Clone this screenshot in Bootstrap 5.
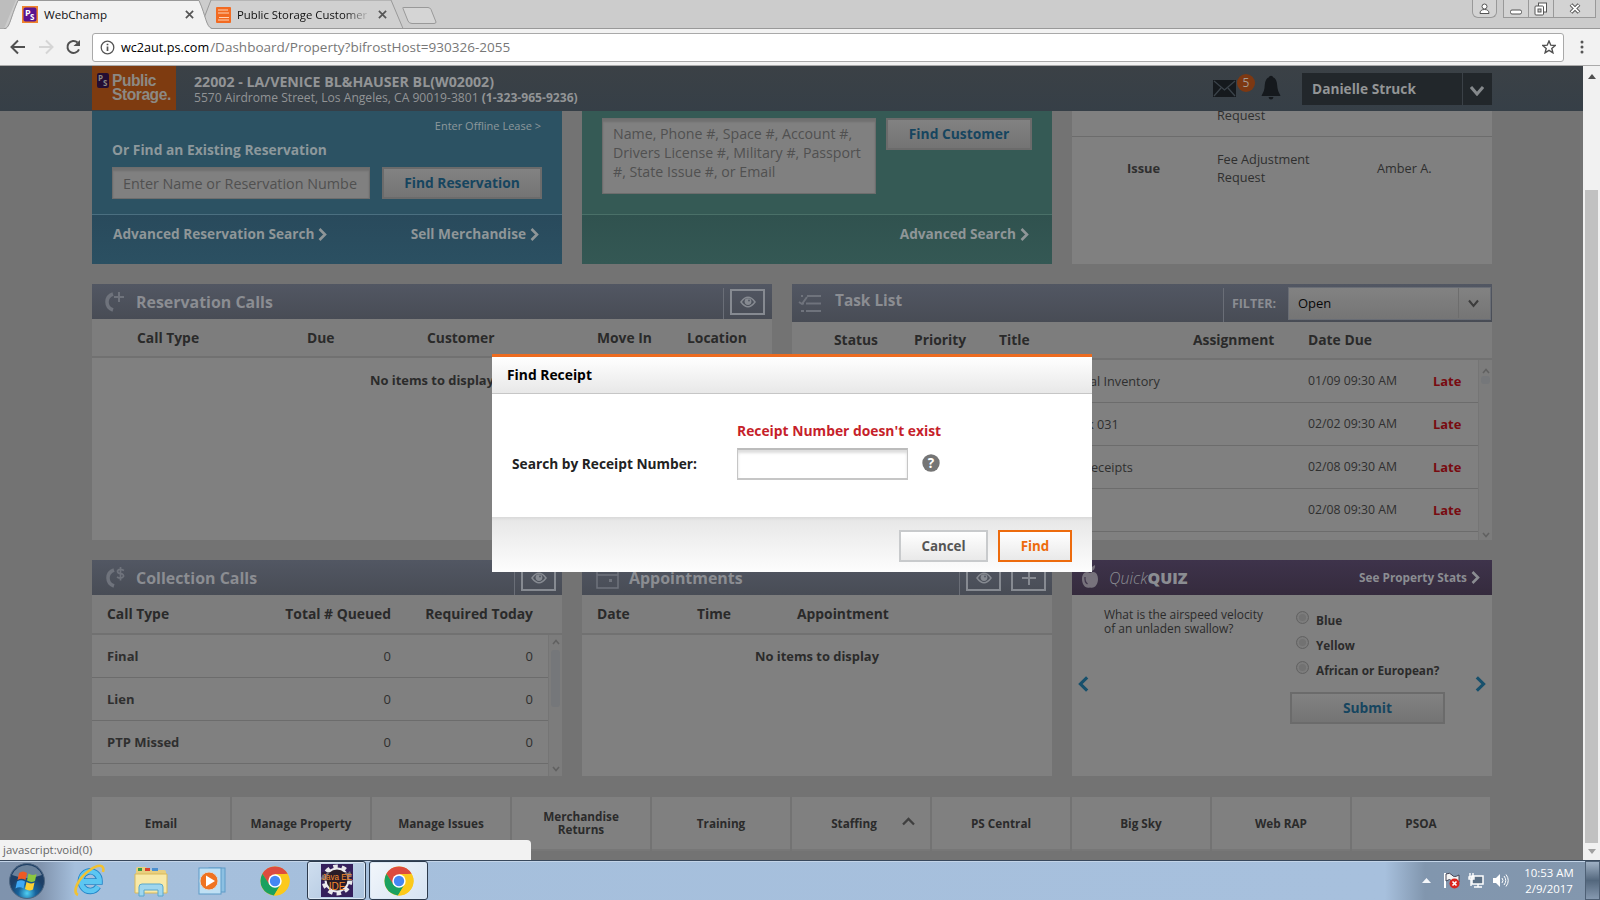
<!DOCTYPE html>
<html lang="en">
<head>
<meta charset="utf-8">
<title>WebChamp</title>
<link href="https://cdn.jsdelivr.net/npm/bootstrap@5.3.0/dist/css/bootstrap.min.css" rel="stylesheet">
<style>
body{width:1600px;height:900px;overflow:hidden;font-family:"Open Sans","Noto Sans",sans-serif;font-size:13px;line-height:18px;color:#2b2b2b;background:#737373}
svg{display:block;flex:none}
.sb{font-weight:700}
/* browser chrome */
.tabstrip{height:29px;background:#ccc;border-bottom:1px solid #999;position:relative;font-size:11.6px;color:#111}
.tabshapes{position:absolute;left:0;top:0}
.tabrow{position:relative;height:29px}
.tabtitle{font-size:11.6px;white-space:nowrap;line-height:29px}
.fadeout{width:131px;overflow:hidden;font-size:11.35px;-webkit-mask-image:linear-gradient(90deg,#000 82%,transparent 102%)}
.winbtn{height:18px;border:1px solid #999;border-top:0;background:#d3d3d3}
.toolbar{height:37px;background:#f2f2f2;border-bottom:1px solid #aaa}
.omni{width:1472px;height:29px;border:1px solid #a9a9a9;border-radius:3px;background:#fff;margin-left:12px;padding:0 7px 0 7px}
.url{font-size:13.52px;color:#777;white-space:nowrap;line-height:27px}
.url b{font-weight:400;color:#000;font-size:12.65px;margin-right:1px}
/* page */
.viewport{height:794px;position:relative}
.sitepage{width:1583px;overflow:hidden}
.sitehead{height:45px;background:linear-gradient(#3b4146,#363f47);padding-left:92px;color:#929496}
.brandbox{width:84px;height:44px;background:#7e3b10}
.brandname{font:700 15.6px/14px "Liberation Sans",sans-serif;letter-spacing:-.45px;color:#8c8984}
.content{width:1400px;margin-left:92px}
.userbox{width:190px;height:32px;background:#22272b;color:#939596;font-size:13.7px}
.gap20{gap:20px}
.hero{height:153px;width:470px}
.blue{background:#2c5263}.blue .herofoot{background:linear-gradient(#294a5c,#2b5062);border-top:1px solid #4b6f80}
.green{background:#355a55}.green .herofoot{background:linear-gradient(#30524f,#345854);border-top:1px solid #4a7068}
.herotop{height:103px;position:relative}
.herofoot{height:50px;color:#8f9698;font-size:13.65px;font-weight:700;padding:10px 21px 0}
.herotxt{color:#8d989c}
.gbtn{height:32px;border:2px solid #6b6b6b;background:linear-gradient(#828282,#747474);color:#16455f;font-weight:700;font-size:13.8px;border-radius:0;padding:0;line-height:26px}
.field{background:#808080;border:1px solid #6d6d6d;box-shadow:inset 0 3px 2px #707070;color:#505050;border-radius:0}
.panel{background:#808080;position:relative;overflow:hidden}
.phead{height:35px;background:linear-gradient(#52586a 0,#50576a 10%,#484d57);color:#8b8d92;font-size:15.95px;font-weight:700}
.phead{background:linear-gradient(#525763,#484c55)}
.phead .vline{width:1px;background:#6a6e77;align-self:stretch}
.eyebtn{width:35px;height:26px;border:2px solid #868a91;display:flex;align-items:center;justify-content:center;margin:0 7px 0 6px}
.thead-row{height:39px;background:#7d7d7d;border-bottom:2px solid #717171;font-weight:700;font-size:13.85px;color:#2a2a2a;display:grid;align-items:center}
.trow{height:43px;border-bottom:1px solid #6c6c6c;display:grid;align-items:center;color:#2f2f2f}
.g-res{grid-template-columns:45px 170px 120px 170px 90px 1fr}
.g-task{grid-template-columns:42px 80px 85px 194px 115px 125px 1fr}
.g-coll{grid-template-columns:15px 100px 184px 142px 1fr}
.g-app{grid-template-columns:15px 100px 100px 1fr}
.late{color:#780b10;font-weight:700;font-size:12.9px}
.sbar{width:14px;background:#7c7c7c;border-left:1px solid #757575}
.sthumb{width:9px;background:#75777a;margin:2px 2px;border-radius:3px}
.phead.quiz{background:linear-gradient(#3e334b,#352b3d)}
.qradio{width:13px;height:13px;border-radius:50%;border:1.500px solid #636363;background:#727272;box-shadow:inset 0 0 0 2px #7c7c7c}
.tile{width:138px;margin-right:2px;height:54px;background:#808080;border-bottom:2px solid #777;font-weight:700;font-size:11.75px;line-height:13px;color:#2b2b2b;text-align:center}
.scroller{width:17px;background:#f1f1f1}
.thumb{width:13px;height:653px;background:#c1c1c1;margin-top:111px}
/* dialog */
.dlg{position:absolute;left:492px;top:288px;width:600px;height:218px;border:0;border-top:3px solid #ec6b20;border-radius:0;background:#fff;overflow:hidden}
.dlg .modal-header{height:37px;padding:0 15px;background:linear-gradient(#fff,#e8e8e8);border-bottom:1px solid #c6c6c6;border-radius:0;font-size:13.85px;font-weight:700;color:#000}
.dlg .modal-body{padding:27px 0 0 20px}
.dlg .modal-footer{height:55px;padding:3px 20px 0;gap:10px;background:linear-gradient(#d9d9d9,#e8e8e8 7%,#fdfdfd);border:0;border-radius:0}
.dlg .modal-footer>*{margin:0}
.dbtn{height:32px;border:2px solid #c8cacc;background:linear-gradient(#fff,#e9e9e9);font-weight:700;font-size:13.35px;color:#555;border-radius:0;padding:0;line-height:26px}
.dbtn.go{border-color:#ed6b0d;color:#ed6b0d}
.rinput{width:171px;height:32px;border:1px solid #c2c2c2;border-width:2px 1px;border-color:#bcbcbc #c6c6c6 #c6c6c6;border-radius:0;box-shadow:inset 0 3px 3px #ddd;background:#fff}
.statusbub{position:absolute;left:0;bottom:0;width:531px;height:20px;background:#f2f2f2;border-radius:0 4px 0 0;font-size:11.4px;color:#666;line-height:20px;padding-left:3px;z-index:3}
/* taskbar */
.taskbar{height:40px;border-top:1px solid #38485c;background:linear-gradient(90deg,#7f93ad 0,#8093ad 40px,#a5bfdc 75px,#a7c0dd 1385px,#8196ae 1425px,#8397ae);box-shadow:inset 0 1px 0 #c3d4e8}
.tbtn{width:59px;height:39px;border:1px solid #2c3a4c;border-radius:3px;background:linear-gradient(135deg,#cfdeef,#a9c1dc);box-shadow:inset 0 0 0 1px #dce8f5}
.tbtn.on{background:linear-gradient(135deg,#f2f6fb,#d6e3f2)}
.clock{width:70px;text-align:center;color:#fff;font-size:11.4px;line-height:16px}
</style>
</head>
<body class="d-flex flex-column">
<svg width="0" height="0" class="position-absolute">
 <defs>
  <symbol id="eye" viewBox="0 0 16 12"><path d="M1 6Q8-3.500 15 6Q8 15.500 1 6Z" fill="none" stroke="#868a91" stroke-width="1.500"/><circle cx="8" cy="5.600" r="3.400" fill="#868a91"/><circle cx="9" cy="4.600" r="1" fill="#555b66"/></symbol>
  <symbol id="chev" viewBox="0 0 9 13"><path d="M1.500 1L7 6.500 1.500 12" fill="none" stroke="currentColor" stroke-width="2.600"/></symbol>
  <symbol id="chrome" viewBox="0 0 30 30"><circle cx="15" cy="15" r="14.500" fill="#fbc91b"/><path d="M2.400 7.800A14.500 14.500 0 0 1 27.600 7.800L15 8.500 8.800 18.600Z" fill="#dd4b3e"/><path d="M2.400 7.800A14.500 14.500 0 0 0 14 29.400L20.600 18.500 9.400 18.500Z" fill="#1aa15f"/><path d="M27.700 8H15V15L20.600 18.500 14 29.400A14.500 14.500 0 0 0 27.700 8Z" fill="#fbc91b"/><circle cx="15" cy="15" r="6.700" fill="#fff"/><circle cx="15" cy="15" r="5.200" fill="#4587f3"/></symbol>
  <symbol id="xx" viewBox="0 0 10 10"><path d="M1 1L9 9M9 1L1 9" stroke="#555" stroke-width="1.900"/></symbol>
  <symbol id="up" viewBox="0 0 8 6"><path d="M1 5L4 1.500 7 5" fill="none" stroke="#616161" stroke-width="1.600"/></symbol>
 </defs>
</svg>

<div class="tabstrip">
 <svg class="tabshapes" width="460" height="29">
  <path d="M200 28.500L211 0H391L403 28.500Z" fill="#d0d0d0" stroke="#999"/>
  <path d="M0 0H16L4 28.500H0Z" fill="#bdbdbd"/>
  <path d="M5 29C10 28 10 20 18 1H199C206 16 206 27 212 29Z" fill="#f2f2f2"/>
  <path d="M5 28.500C10 27 10 19 18 .5H199C206 16 206 27 212 28.500" fill="none" stroke="#999"/>
  <path d="M403 8.500Q402 7.500 404 7.500H428Q430 7.500 431 9.500L436 22Q436 23.500 434 23.500H412Q409 23.500 408 21Z" fill="#d5d5d5" stroke="#999"/>
 </svg>
 <div class="tabrow d-flex align-items-center">
  <svg width="16" height="17" style="margin-left:22px"><rect width="16" height="17" fill="#f0832c"/><rect x="1.500" y="1.500" width="13" height="14" rx="2" fill="#5a1490"/><text x="3" y="9.500" font-size="9" font-weight="700" fill="#fff" font-family="Open Sans">P</text><text x="8" y="14" font-size="8" font-weight="700" fill="#fff" font-family="Open Sans">S</text></svg>
  <span class="tabtitle" style="width:141px;margin-left:6px">WebChamp</span>
  <svg width="9" height="9"><use href="#xx"/></svg>
  <svg width="15" height="16" style="margin-left:22px"><rect width="15" height="16" rx="1" fill="#f26a21"/><path d="M2 3H12M2 6H13M3 10.500H13M2 13H13" stroke="#ffd3b5"/></svg>
  <span class="tabtitle fadeout" style="margin-left:6px">Public Storage Customer</span>
  <svg width="9" height="9" style="margin-left:10px"><use href="#xx"/></svg>
  <div class="d-flex align-self-start ms-auto" style="margin-right:4px">
   <div class="winbtn d-flex align-items-center justify-content-center rounded-bottom" style="width:25px;margin-right:6px"><svg width="11" height="12"><circle cx="5.500" cy="3.500" r="2.500" fill="#fff" stroke="#555"/><path d="M1 10.500Q1 6.500 5.500 6.500T10 10.500Z" fill="#fff" stroke="#555"/></svg></div>
   <div class="winbtn d-flex align-items-end justify-content-center" style="width:26px"><svg width="13" height="8"><rect x=".5" y="1" width="11" height="4" rx="1.500" fill="#fff" stroke="#555"/></svg></div>
   <div class="winbtn d-flex align-items-center justify-content-center border-start-0" style="width:25px"><svg width="14" height="14"><rect x="4.500" y="1" width="8" height="9" fill="#fff" stroke="#555"/><rect x="1" y="4" width="8.500" height="9" rx="1" fill="#fff" stroke="#555"/><rect x="4" y="7" width="3" height="3" fill="#ccc" stroke="#555"/></svg></div>
   <div class="winbtn d-flex align-items-center justify-content-center border-start-0" style="width:42px"><svg width="12" height="11"><path d="M2 1.500L10 9.500M10 1.500L2 9.500" stroke="#555" stroke-width="3.800"/><path d="M2.300 1.800L9.700 9.200M9.700 1.800L2.300 9.200" stroke="#fff" stroke-width="1.700"/></svg></div>
  </div>
 </div>
</div>
<div class="toolbar d-flex align-items-center">
 <svg width="70" height="16" style="margin-left:10px"><path d="M15 8H2M8 1.500L1.500 8 8 14.500" fill="none" stroke="#505050" stroke-width="2"/><path d="M29 8H42M36 1.500L42.500 8 36 14.500" fill="none" stroke="#d5d5d5" stroke-width="2"/><path d="M69 10.300A6 6 0 1 1 67.500 3.500" fill="none" stroke="#505050" stroke-width="2"/><path d="M71 0V7H63.500Z" fill="#505050"/></svg>
 <div class="omni d-flex align-items-center">
  <svg width="15" height="15"><circle cx="7.500" cy="7.500" r="6.300" fill="none" stroke="#555" stroke-width="1.300"/><path d="M7.500 6.500V11M7.500 3.700V5.300" stroke="#555" stroke-width="1.700"/></svg>
  <span class="url" style="margin-left:6px"><b>wc2aut.ps.com</b>/Dashboard/Property?bifrostHost=930326-2055</span>
  <svg width="14" height="14" class="ms-auto"><path d="M7 1L8.800 5.200 13.200 5.500 9.800 8.400 10.900 12.800 7 10.400 3.100 12.800 4.200 8.400 .8 5.500 5.200 5.200Z" fill="none" stroke="#505050" stroke-width="1.400"/></svg>
 </div>
 <svg width="4" height="16" style="margin-left:16px" fill="#555"><circle cx="2" cy="3" r="1.500"/><circle cx="2" cy="8" r="1.500"/><circle cx="2" cy="13" r="1.500"/></svg>
</div>

<div class="viewport d-flex">
 <div class="sitepage">
  <header class="sitehead d-flex">
   <div class="brandbox d-flex">
    <svg width="12" height="15" style="margin:7px 3px 0 5px"><rect width="12" height="15" rx="2" fill="#240d33"/><text x="1" y="8" font-size="8" font-weight="700" fill="#8c8984" font-family="Open Sans">P</text><text x="6" y="13" font-size="8" font-weight="700" fill="#8c8984" font-family="Open Sans">S</text></svg>
    <div class="brandname" style="padding-top:8px">Public<br>Storage.</div>
   </div>
   <div style="margin:8px 0 0 18px">
    <div class="sb" style="font-size:14.19px;line-height:16px">22002 - LA/VENICE BL&amp;HAUSER BL(W02002)</div>
    <div style="font-size:12.1px;line-height:15px">5570 Airdrome Street, Los Angeles, CA 90019-3801 <span class="sb">(1-323-965-9236)</span></div>
   </div>
   <div class="d-flex ms-auto" style="margin-right:91px;padding-top:7px">
    <div class="d-flex position-relative">
     <svg width="24" height="19" style="margin-top:6px"><rect y="1" width="23" height="17" fill="#15191d"/><path d="M1 2L11.500 11 22 2M1 17L8 9M22 17L15 9" fill="none" stroke="#3b434a" stroke-width="1.300"/></svg>
     <span class="position-absolute rounded-circle text-center" style="left:24px;top:1px;width:18px;height:18px;background:#7d3812;color:#a39a93;font-size:12px;line-height:17px">5</span>
    </div>
    <svg width="20" height="25" style="margin:2px 21px 0 24px" fill="#15191d"><circle cx="10" cy="3" r="2.200"/><path d="M10 2C4 2 4 8 3.500 13 3 17 1 19 .5 21H19.500C19 19 17 17 16.500 13 16 8 16 2 10 2Z"/><path d="M7.500 22H12.500Q12 24.500 10 24.500T7.500 22Z"/></svg>
    <div class="userbox d-flex align-items-center sb"><span style="padding-left:10px;width:160px">Danielle Struck</span><span style="width:1px;height:32px;background:#3b4147"></span><svg width="14" height="11" style="margin:2px 0 0 7px"><path d="M1 2L7 9 13 2" fill="none" stroke="#85898c" stroke-width="3"/></svg></div>
   </div>
  </header>

  <div class="content">
   <div class="d-flex gap20">
    <section class="hero blue">
     <div class="herotop" style="padding:6px 20px 0">
      <div class="herotxt text-end" style="font-size:11px;padding-right:1px">Enter Offline Lease &gt;</div>
      <div class="herotxt sb" style="font-size:13.8px;margin-top:6px">Or Find an Existing Reservation</div>
      <div class="d-flex" style="gap:12px;margin-top:8px">
       <div class="field d-flex align-items-center overflow-hidden text-nowrap" style="width:258px;height:32px;padding:1px 0 0 10px;font-size:14.35px">Enter Name or Reservation Numbe</div>
       <button class="btn gbtn" style="width:160px">Find Reservation</button>
      </div>
     </div>
     <div class="herofoot d-flex justify-content-between">
      <span class="d-flex" style="gap:4px">Advanced Reservation Search <svg width="9" height="13" style="margin-top:3px"><use href="#chev"/></svg></span>
      <span class="d-flex" style="gap:4px;margin-right:2px">Sell Merchandise <svg width="9" height="13" style="margin-top:3px"><use href="#chev"/></svg></span>
     </div>
    </section>
    <section class="hero green">
     <div class="herotop d-flex" style="padding:7px 20px 0;gap:10px">
      <div class="field" style="width:274px;height:76px;padding:5px 0 0 10px;font-size:14.2px;line-height:19px;white-space:nowrap">Name, Phone #, Space #, Account #,<br>Drivers License #, Military #, Passport<br>#, State Issue #, or Email</div>
      <button class="btn gbtn" style="width:146px">Find Customer</button>
     </div>
     <div class="herofoot d-flex justify-content-end"><span class="d-flex" style="gap:4px;margin-right:2px">Advanced Search <svg width="9" height="13" style="margin-top:3px"><use href="#chev"/></svg></span></div>
    </section>
    <section class="hero panel" style="width:420px;font-size:12.7px;color:#2f2f2f">
     <div style="height:26px;border-bottom:1px solid #6c6c6c;padding-left:145px;line-height:9px">Request</div>
     <div class="d-flex align-items-center" style="height:61px"><span class="sb" style="padding-left:55px;flex:none;width:145px;font-size:12.9px">Issue</span><span style="width:160px">Fee Adjustment<br>Request</span><span>Amber A.</span></div>
    </section>
   </div>

   <div class="d-flex gap20" style="margin-top:20px">
    <section class="panel" style="width:680px;height:256px">
     <div class="phead d-flex align-items-center">
      <svg width="20" height="22" style="margin:0 11px 0 13px" fill="none" stroke="#6f737c"><path d="M8 3Q2 5 2 11T8 19" stroke-width="3.500"/><path d="M14 1V11M9 6H19" stroke-width="2"/></svg>
      <span>Reservation Calls</span><span class="vline ms-auto mt-1"></span><span class="eyebtn"><svg width="16" height="12"><use href="#eye"/></svg></span>
     </div>
     <div class="thead-row g-res"><i></i><span>Call Type</span><span>Due</span><span>Customer</span><span>Move In</span><span>Location</span></div>
     <div class="text-center sb" style="font-size:12.9px;padding-top:13px">No items to display</div>
    </section>
    <section class="panel" style="width:700px;height:256px">
     <div class="phead d-flex align-items-center" style="height:38px;font-size:15.4px">
      <svg width="24" height="19" style="margin:0 13px 0 6px" fill="none" stroke="#6f737c" stroke-width="2"><path d="M9 2H23M8 9.500H23M8 17H23M1 8L4 10 9 3M4 9.500H6M3 17H6M3 2H5"/></svg>
      <span style="margin-top:-4px">Task List</span><span class="vline ms-auto mt-1"></span>
      <span style="font-size:12.5px;margin:2px 12px 0 8px">FILTER:</span>
      <div class="d-flex align-items-center" style="width:203px;height:33px;background:linear-gradient(#828282,#757575);border:1px solid #696d75;margin-right:1px;color:#080808;font-size:13px;font-weight:400"><span style="padding-left:9px;width:169px">Open</span><span style="width:1px;height:30px;background:#6d6d6d"></span><svg width="11" height="9" style="margin-left:9px"><path d="M1 1.500L5.500 7 10 1.500" fill="none" stroke="#3c3c3c" stroke-width="2"/></svg></div>
     </div>
     <div class="thead-row g-task" style="height:38px"><i></i><span>Status</span><span>Priority</span><span>Title</span><span>Assignment</span><span>Date Due</span></div>
     <div class="d-flex" style="height:180px">
      <div class="flex-fill">
       <div class="trow g-task"><i></i><i></i><i></i><span style="padding-left:91px;font-size:12.7px;white-space:nowrap">al Inventory</span><i></i><span style="font-size:12.27px">01/09 09:30 AM</span><span class="late">Late</span></div>
       <div class="trow g-task"><i></i><i></i><i></i><span style="padding-left:88px;font-size:12.7px">k 031</span><i></i><span style="font-size:12.27px">02/02 09:30 AM</span><span class="late">Late</span></div>
       <div class="trow g-task"><i></i><i></i><i></i><span style="padding-left:92px;font-size:12.7px">eceipts</span><i></i><span style="font-size:12.27px">02/08 09:30 AM</span><span class="late">Late</span></div>
       <div class="trow g-task"><i></i><i></i><i></i><i></i><i></i><span style="font-size:12.27px">02/08 09:30 AM</span><span class="late">Late</span></div>
      </div>
      <div class="sbar d-flex flex-column align-items-center"><svg width="8" height="6" style="margin-top:8px"><use href="#up"/></svg><span class="sthumb" style="height:8px"></span><svg width="8" height="6" class="mt-auto" style="transform:scaleY(-1);margin-bottom:2px"><use href="#up"/></svg></div>
     </div>
    </section>
   </div>

   <div class="d-flex gap20" style="margin-top:20px">
    <section class="panel" style="width:470px;height:216px">
     <div class="phead d-flex align-items-center">
      <svg width="20" height="22" style="margin:0 10px 0 14px" fill="none" stroke="#6f737c"><path d="M8 3Q2 5 2 11T8 19" stroke-width="3.500"/><path d="M18 3.500Q13 1 11.500 4 11.500 6.500 14.500 6.700 18 7 17.500 9.500 15 12.500 11 10M14.500 0V13.500" stroke-width="1.700"/></svg>
      <span>Collection Calls</span><span class="vline ms-auto mt-1"></span><span class="eyebtn" style="margin-right:6px"><svg width="16" height="12"><use href="#eye"/></svg></span>
     </div>
     <div class="thead-row g-coll" style="height:40px"><i></i><span>Call Type</span><span class="text-end">Total # Queued</span><span class="text-end">Required Today</span></div>
     <div class="d-flex" style="height:141px">
      <div class="flex-fill">
       <div class="trow g-coll"><i></i><span class="sb">Final</span><span class="text-end">0</span><span class="text-end">0</span></div>
       <div class="trow g-coll"><i></i><span class="sb">Lien</span><span class="text-end">0</span><span class="text-end">0</span></div>
       <div class="trow g-coll"><i></i><span class="sb">PTP Missed</span><span class="text-end">0</span><span class="text-end">0</span></div>
      </div>
      <div class="sbar d-flex flex-column align-items-center"><svg width="8" height="6" style="margin-top:4px"><use href="#up"/></svg><span class="sthumb" style="height:57px;margin-top:5px"></span><svg width="8" height="6" class="mt-auto mb-1" style="transform:scaleY(-1)"><use href="#up"/></svg></div>
     </div>
    </section>
    <section class="panel" style="width:470px;height:216px">
     <div class="phead d-flex align-items-center">
      <svg width="23" height="22" style="margin:0 10px 0 14px" fill="none" stroke="#6f737c" stroke-width="1.500"><rect x="1" y="3" width="21" height="18"/><path d="M1 8H22"/><rect x="13" y="12" width="3" height="3" fill="#6f737c" stroke="none"/></svg>
      <span>Appointments</span><span class="vline ms-auto mt-1"></span><span class="eyebtn" style="margin-right:10px"><svg width="16" height="12"><use href="#eye"/></svg></span><span class="eyebtn" style="margin:0 6px 0 0"><svg width="14" height="14"><path d="M7 0V14M0 7H14" stroke="#868a91" stroke-width="2"/></svg></span>
     </div>
     <div class="thead-row g-app" style="height:40px"><i></i><span>Date</span><span>Time</span><span>Appointment</span></div>
     <div class="text-center sb" style="font-size:12.9px;padding-top:12px">No items to display</div>
    </section>
    <section class="panel" style="width:420px;height:216px">
     <div class="phead quiz d-flex align-items-center">
      <svg width="18" height="24" style="margin:0 10px 6px 9px;align-self:flex-end" fill="#77727c"><path d="M9 8C4 5 1 9 1 14 1 19 4 24 9 22.500 14 24 17 19 17 14 17 9 14 5 9 8Z"/><path d="M9 7Q9 2 14 0 15 5 9 7Z"/><path d="M4 12Q3.500 17 6.500 19" fill="none" stroke="#40364b" stroke-width="1.300"/></svg>
      <span><i style="font-weight:300">Quick</i><b>QUIZ</b></span>
      <span class="d-flex ms-auto align-items-center" style="font-size:11.8px;gap:4px;margin-right:12px"><span style="margin-top:-2px">See Property Stats</span> <svg width="9" height="13"><use href="#chev"/></svg></span>
     </div>
     <div class="d-flex" style="padding:13px 46px 0 32px;height:181px">
      <div style="font-size:11.96px;line-height:14px;width:186px">What is the airspeed velocity<br>of an unladen swallow?</div>
      <div>
       <div class="d-flex" style="height:25px;gap:7px;padding:3px 0 0 6px"><span class="qradio"></span><span class="sb" style="font-size:11.8px">Blue</span></div>
       <div class="d-flex" style="height:25px;gap:7px;padding:3px 0 0 6px"><span class="qradio"></span><span class="sb" style="font-size:11.8px">Yellow</span></div>
       <div class="d-flex" style="height:25px;gap:7px;padding:3px 0 0 6px"><span class="qradio"></span><span class="sb" style="font-size:11.8px">African or European?</span></div>
       <button class="btn gbtn" style="width:155px;margin-top:9px">Submit</button>
      </div>
     </div>
     <svg class="position-absolute" style="left:6px;top:115px;color:#17506c;transform:scaleX(-1)" width="11" height="18"><use href="#chev"/></svg>
     <svg class="position-absolute" style="right:6px;top:115px;color:#17506c" width="11" height="18"><use href="#chev"/></svg>
    </section>
   </div>

   <nav class="d-flex" style="margin-top:21px">
    <div class="tile d-flex align-items-center justify-content-center">Email</div>
    <div class="tile d-flex align-items-center justify-content-center">Manage Property</div>
    <div class="tile d-flex align-items-center justify-content-center">Manage Issues</div>
    <div class="tile d-flex align-items-center justify-content-center">Merchandise<br>Returns</div>
    <div class="tile d-flex align-items-center justify-content-center">Training</div>
    <div class="tile d-flex align-items-center justify-content-center" style="gap:25px;padding-left:24px">Staffing <svg width="13" height="9" style="margin-top:-4px"><path d="M1 7.500L6.500 2 12 7.500" fill="none" stroke="#3f3f3f" stroke-width="2.300"/></svg></div>
    <div class="tile d-flex align-items-center justify-content-center">PS Central</div>
    <div class="tile d-flex align-items-center justify-content-center">Big Sky</div>
    <div class="tile d-flex align-items-center justify-content-center">Web RAP</div>
    <div class="tile d-flex align-items-center justify-content-center">PSOA</div>
   </nav>
  </div>
 </div>
 <div class="scroller d-flex flex-column align-items-center">
  <svg width="8" height="5" style="margin-top:8px"><path d="M0 5L4 0 8 5Z" fill="#505050"/></svg>
  <div class="thumb"></div>
  <svg width="8" height="5" class="mt-auto" style="margin-bottom:6px"><path d="M0 0L4 5 8 0Z" fill="#a0a0a0"/></svg>
 </div>

 <div class="modal-content dlg">
  <div class="modal-header d-flex align-items-center">Find Receipt</div>
  <div class="modal-body">
   <div class="sb" style="font-size:13.85px;line-height:20px;color:#c61f2b;padding-left:225px">Receipt Number doesn't exist</div>
   <div class="d-flex align-items-center sb" style="margin-top:7px;font-size:13.71px;color:#222">
    <span style="width:225px">Search by Receipt Number:</span>
    <input class="form-control rinput p-0" type="text">
    <svg width="18" height="18" style="margin:-2px 0 0 14px"><circle cx="9" cy="9" r="8.700" fill="#757575"/><text x="9" y="14" text-anchor="middle" font-size="13.500" font-weight="700" fill="#fff" font-family="Open Sans">?</text></svg>
   </div>
  </div>
  <div class="modal-footer d-flex justify-content-end">
   <button class="btn dbtn" style="width:89px">Cancel</button>
   <button class="btn dbtn go" style="width:74px">Find</button>
  </div>
 </div>
 <div class="statusbub">javascript:void(0)</div>
</div>

<footer class="taskbar d-flex align-items-center">
 <svg width="38" height="38" style="margin-left:8px"><defs><radialGradient id="orb" cx=".5" cy=".85"><stop offset="0" stop-color="#4fd0f4"/><stop offset=".5" stop-color="#17629b"/><stop offset="1" stop-color="#1d3f66"/></radialGradient></defs><circle cx="19" cy="19" r="17.500" fill="url(#orb)" stroke="#4d6580"/><path d="M4 13Q9 3 19 3T34 13Q19 19 4 13Z" fill="#fff" opacity=".35"/><path d="M11 11Q15 8 19 11L17.500 18Q13.500 15.500 9.500 18Z" fill="#ee5a24"/><path d="M20.500 11.500Q24 14 28.500 12L27 19Q23 21 19 18.500Z" fill="#8cc63f"/><path d="M9 19.500Q13 17 17 19.500L15.500 26.500Q11.500 24 7.500 26.500Z" fill="#3fa9f5"/><path d="M18.500 20Q22.500 22.500 26.500 20.500L25 27.500Q21 29.500 17 27Z" fill="#fdd032"/></svg>
 <svg width="32" height="34" style="margin-left:28px"><path d="M24 22.500A9.300 9.800 0 1 1 25.500 17.500H9" fill="none" stroke="#2386c8" stroke-width="6.600"/><path d="M24 22.500A9.300 9.800 0 1 1 25.500 17.500H9" fill="none" stroke="#5cc6f2" stroke-width="4.800"/><path d="M4 31C-2 28 4 14 16 6 24 0 31 0 29 8" fill="none" stroke="#f1c232" stroke-width="2.600"/></svg>
 <svg width="34" height="32" style="margin-left:28px"><path d="M2 4Q2 2 4 2H12L14 5H30Q32 5 32 7V27H2Z" fill="#e8cf7f"/><rect x="4" y="3" width="4" height="3" fill="#3a9b42"/><rect x="11" y="3" width="5" height="3" fill="#d8412c"/><rect x="18" y="3" width="6" height="3" fill="#4a8fd0"/><path d="M1 9H33V28H1Z" fill="#f8e9a8" stroke="#d9b95b"/><path d="M5 31V22Q5 19 8 19H26Q29 19 29 22V31H24V25H10V31Z" fill="#9fd6ee" stroke="#5aa7cc"/></svg>
 <svg width="30" height="30" style="margin-left:30px"><rect x="11" y="2" width="16" height="24" fill="#8cc0e2" stroke="#5e9cc8"/><rect x="1" y="2" width="22" height="26" fill="#bfe0f4" stroke="#5e9cc8"/><circle cx="11" cy="15" r="9" fill="#ef7321" stroke="#d8d8d8"/><path d="M8 9.500V20.500L17 15Z" fill="#fff"/></svg>
 <svg width="30" height="30" style="margin-left:32px"><use href="#chrome"/></svg>
 <div class="tbtn d-flex align-items-center justify-content-center" style="margin-left:17px"><svg width="32" height="33"><rect width="32" height="33" fill="#35205c"/><circle cx="16" cy="16" r="13.500" fill="none" stroke="#e8e8ea" stroke-width="4" stroke-dasharray="4.500 4"/><circle cx="16" cy="16" r="11.500" fill="#2a1c28" stroke="#ececee" stroke-width="2"/><path d="M1 8H31V17H1Z" fill="#2a1c28" opacity=".6"/><text x="16" y="16" text-anchor="middle" font-size="9" fill="#f58a2c" font-family="Liberation Sans" textLength="30" lengthAdjust="spacingAndGlyphs">Java EE</text><text x="16" y="25.500" text-anchor="middle" font-size="10" fill="#f58a2c" font-family="Liberation Sans">IDE</text></svg></div>
 <div class="tbtn on d-flex align-items-center justify-content-center" style="margin-left:3px"><svg width="30" height="30"><use href="#chrome"/></svg></div>
 <div class="d-flex align-items-center ms-auto">
  <svg width="9" height="5"><path d="M0 5L4.500 0 9 5Z" fill="#f4f7fb"/></svg>
  <svg width="17" height="17" style="margin-left:12px"><path d="M2 1V16" stroke="#fff" stroke-width="2"/><path d="M3 2Q7 0 9 3T16 3V10Q11 12 9 9T3 9Z" fill="#f3f3f3" stroke="#445"/><circle cx="11.500" cy="11.500" r="5" fill="#d9251d"/><path d="M9.500 9.500L13.500 13.500M13.500 9.500L9.500 13.500" stroke="#fff" stroke-width="1.600"/></svg>
  <svg width="16" height="15" style="margin-left:8px"><rect x="4" y="3" width="11" height="8" fill="#5c7085" stroke="#fff" stroke-width="1.500"/><path d="M6 14H14M10 11V14M2 0V4M5 0V4M1 4H6V6H1ZM3 6V13" stroke="#fff" stroke-width="1.400" fill="none"/></svg>
  <svg width="17" height="15" style="margin-left:8px"><path d="M1 5H4L8 1V14L4 10H1Z" fill="#fff"/><path d="M10 5Q12 7.500 10 10M12 3Q15.500 7.500 12 12M14 1.500Q18.500 7.500 14 13.500" fill="none" stroke="#fff"/></svg>
  <div class="clock" style="margin:0 1px 0 5px">10:53 AM<br>2/9/2017</div>
  <div style="width:15px;height:39px;border:1px solid #4e6075;background:linear-gradient(#9fb0c4,#53677d 50%,#8699b0)"></div>
 </div>
</footer>
<script src="https://cdn.jsdelivr.net/npm/bootstrap@5.3.0/dist/js/bootstrap.bundle.min.js"></script>
</body>
</html>
